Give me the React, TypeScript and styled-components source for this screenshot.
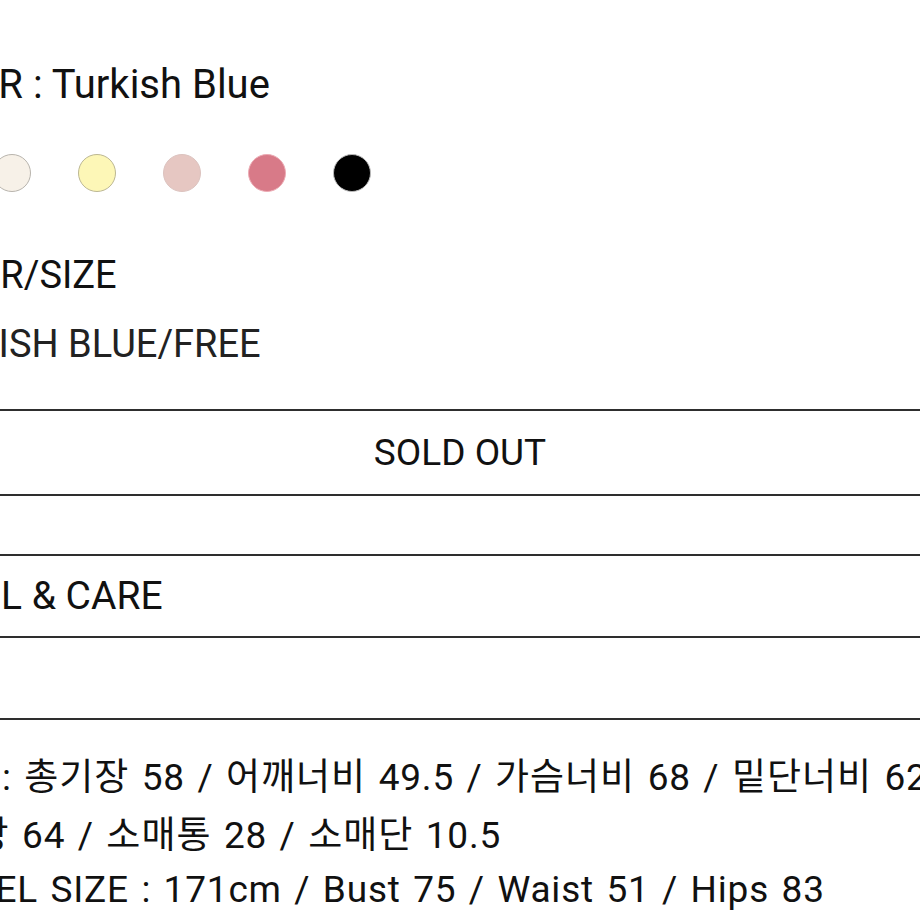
import styled, { createGlobalStyle } from 'styled-components';

const GlobalStyle = createGlobalStyle`
  html, body {
    margin: 0;
    padding: 0;
    background: #ffffff;
    overflow: hidden;
  }
  body {
    font-family: Roboto, "Noto Sans CJK KR", sans-serif;
    color: #111111;
  }
`;

const swatches = [
  { fill: '#3a9fb0', ring: '#2c8796' },
  { fill: '#f7f1e8', ring: '#b8b4ad' },
  { fill: '#fdf7b7', ring: '#bcb792' },
  { fill: '#e6c7c2', ring: '#dcc3bf' },
  { fill: '#d87a88', ring: '#ecabb4' },
  { fill: '#000000', ring: '#b9b9b9' },
];

function App(): JSX.Element {
  return (
    <>
      <GlobalStyle />
      <Page>
        <Label>COLOR : Turkish Blue</Label>
        <Swatches>
          {swatches.map((s) => (
            <Swatch key={s.fill} $fill={s.fill} $ring={s.ring} />
          ))}
        </Swatches>
        <SubLabel>COLOR/SIZE</SubLabel>
        <Option>TURKISH BLUE/FREE</Option>
        <SoldOut>SOLD OUT</SoldOut>
        <Accordion>
          <AccordionItem>DETAIL &amp; CARE</AccordionItem>
          <AccordionItem />
        </Accordion>
        <Description>
          <DescRow>
            SIZE : <Ko>총기장</Ko> 58 / <Ko>어깨너비</Ko> 49.5 / <Ko>가슴너비</Ko> 68 /{' '}
            <Ko>밑단너비</Ko> 62
          </DescRow>
          <DescRow>
            / <Ko>화장</Ko> 64 / <Ko>소매통</Ko> 28 / <Ko>소매단</Ko> 10.5
          </DescRow>
          <DescRow>MODEL SIZE : 171cm / Bust 75 / Waist 51 / Hips 83</DescRow>
        </Description>
      </Page>
    </>
  );
}

export default App;

const Page = styled.div`
  width: 1112px;
  margin-left: -96px;
  padding-top: 62px;
  display: flex;
  flex-direction: column;
`;

const Label = styled.div`
  margin-left: -7px;
  font-size: 40px;
  line-height: 46px;
  white-space: nowrap;
`;

const Swatches = styled.div`
  display: flex;
  gap: 47px;
  margin: 46px 0 0 4px;
`;

const Swatch = styled.span<{ $fill: string; $ring: string }>`
  width: 38px;
  height: 38px;
  box-sizing: border-box;
  border-radius: 50%;
  background: ${(p) => p.$fill};
  border: 1.5px solid ${(p) => p.$ring};
`;

const SubLabel = styled.div`
  font-size: 38px;
  line-height: 46px;
  margin-top: 60px;
  white-space: nowrap;
`;

const Option = styled(SubLabel)`
  margin-top: 23px;
  color: #222222;
`;

const SoldOut = styled.div`
  margin-top: 42px;
  height: 83px;
  border-top: 2px solid #2e2e2e;
  border-bottom: 2px solid #2e2e2e;
  display: flex;
  align-items: center;
  justify-content: center;
  font-size: 37px;
`;

const Accordion = styled.div`
  margin-top: 58px;
  border-bottom: 2px solid #2e2e2e;
`;

const AccordionItem = styled.div`
  height: 80px;
  border-top: 2px solid #2e2e2e;
  display: flex;
  align-items: center;
  font-size: 39px;
  text-indent: -9px;
  white-space: nowrap;
`;

const Description = styled.div`
  margin: 27px 0 0 7px;
  display: flex;
  flex-direction: column;
`;

const DescRow = styled.div`
  font-size: 37px;
  line-height: 54px;
  letter-spacing: 0.8px;
  word-spacing: 2.5px;
  white-space: nowrap;
`;

const Ko = styled.span`
  font-family: "Noto Sans CJK KR", sans-serif;
  letter-spacing: 1px;
`;
